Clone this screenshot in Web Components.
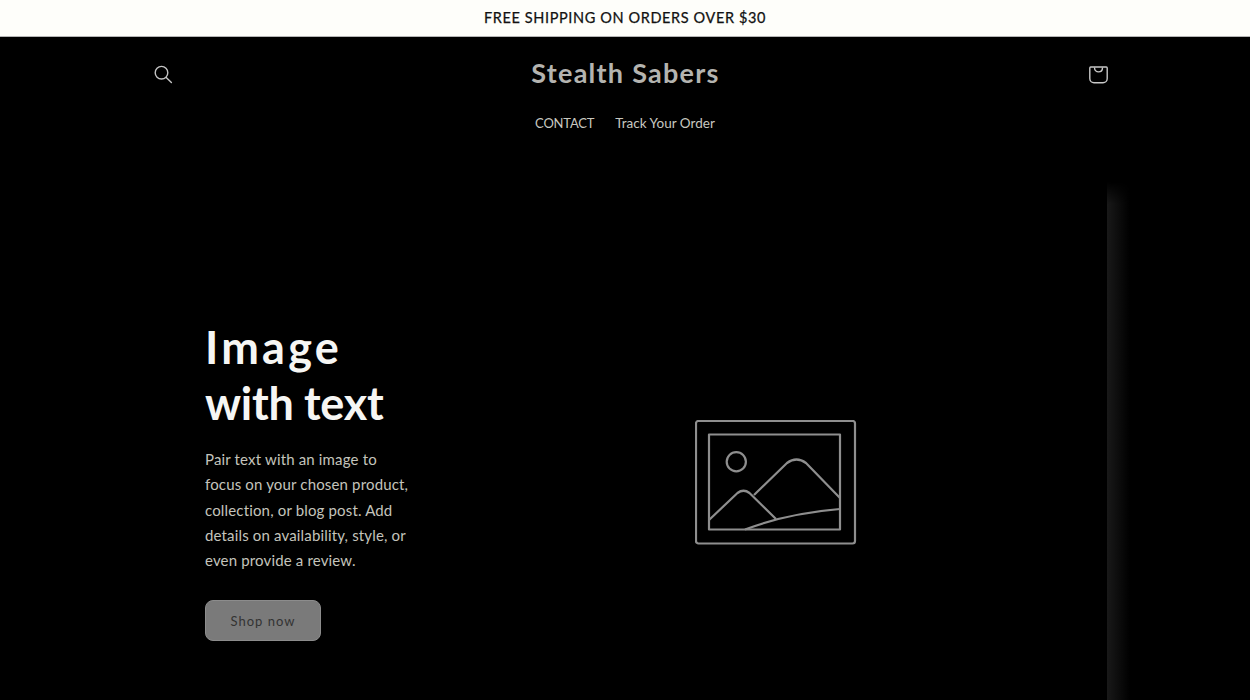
<!DOCTYPE html>
<html lang="en"><head><meta charset="utf-8"><title>Stealth Sabers</title>
<style>
html,body{margin:0;padding:0;background:#000;height:700px;overflow:hidden;font-family:Lato,"Liberation Sans",sans-serif}
</style></head><body>
<announce-bar>FREE SHIPPING ON ORDERS OVER $30</announce-bar>
<site-header name="Stealth Sabers"><nav-link style="--fs:13px;--ls:-.2px">CONTACT</nav-link><nav-link style="--fs:13.5px;--ls:.02px">Track Your Order</nav-link></site-header>
<image-text>
  <span slot="title"><span style="letter-spacing:3.2px">Image</span><br><span style="letter-spacing:-.3px">with text</span></span>
  Pair text with an image to<br>focus on your chosen product,<br>collection, or blog post. Add<br>details on availability, style, or<br>even provide a review.
  <span slot="cta">Shop now</span>
</image-text>
<script>
function def(name, html){
  customElements.define(name, class extends HTMLElement{
    constructor(){super();this.attachShadow({mode:'open'}).innerHTML=typeof html==='function'?html(this):html;}
  });
}
def('announce-bar',`<style>:host{display:flex;align-items:center;justify-content:center;padding-bottom:1px;height:35px;background:#fefefa;border-bottom:1px solid #b5b5b5;color:#121212;font:400 14.5px Lato,sans-serif;letter-spacing:.62px;-webkit-text-stroke:.25px #121212}</style><slot></slot>`);
def('nav-link',`<style>:host{display:block;color:#c8c8c0;font:400 var(--fs,14px)/20px Lato,sans-serif;letter-spacing:var(--ls,0)}</style><slot></slot>`);
def('site-header',el=>`<style>
:host{display:block;height:110px;box-sizing:border-box;padding:19px 135px 0;background:#000}
.top{display:grid;grid-template-columns:1fr auto 1fr;align-items:center;height:36px}
.logo{color:#b4b4b0;font:700 27px/36px Lato,sans-serif;letter-spacing:1.25px;margin:-1px 0 1px 1px}
.search{margin-left:8.5px}
.cart{justify-self:end;display:flex}
svg{display:block}
nav{display:flex;justify-content:center;gap:21px;margin:21px 0 0}
</style>
<div class="top">
<svg class="search" width="36" height="36" viewBox="0 0 36 36" fill="none" stroke="#c4c4c4" stroke-width="1.4"><circle cx="17.5" cy="16.7" r="6.3"/><path d="M22.2 21.4l5.2 5.2" stroke-linecap="round"/></svg>
<div class="logo">${el.getAttribute('name')}</div>
<div class="cart"><svg width="36" height="36" viewBox="0 -1 36 36" fill="none" stroke="#c8c8c8" stroke-width="1.4"><path d="M11.7 10h15.6a.9.9 0 0 1 .9.9v10.600a4.200 4.200 0 0 1-4.200 4.200h-9a4.200 4.200 0 0 1-4.200-4.200V10.900a.9.9 0 0 1 .9-.9z"/><path d="M15.500 10.400c0 6 8 6 8 0"/></svg></div>
</div>
<nav><slot></slot></nav>`);
def('image-text',`<style>
:host{display:grid;grid-template-columns:302px 662px;height:553px;padding:0 0 0 143px;box-sizing:border-box;background:#000}
.text{padding:172px 0 0 62px;min-width:0;white-space:nowrap}
h2{margin:0;color:#f6f6f4;font:700 45px/56px Lato,sans-serif}
p{margin:16px 0 0;color:#c4c4bc;font:400 15px/25.3px Lato,sans-serif;letter-spacing:.16px}
.btn{display:flex;align-items:center;justify-content:center;width:116px;height:41px;margin-top:27px;box-sizing:border-box;border:1px solid #8c8c8c;border-radius:8px;background:#7a7a7a;color:#333;font:400 13px Lato,sans-serif;letter-spacing:1px}
.media{position:relative;display:flex;align-items:center;justify-content:center;padding-top:8px}
.media svg{display:block;margin-top:110px}
.edge{position:absolute;left:100%;top:35px;bottom:0;width:23px;background:linear-gradient(90deg,#191919,#000);-webkit-mask:linear-gradient(#0000,#000 22px)}
</style>
<div class="text"><h2><slot name="title"></slot></h2><p><slot></slot></p><div class="btn"><slot name="cta"></slot></div></div>
<div class="media">
<svg width="162" height="125" viewBox="0 0 162 125" fill="none" stroke="#8e8e8e" stroke-width="2.2" stroke-linejoin="round">
<rect x="1" y="1" width="159" height="122.5" rx="2.500"/>
<rect x="14" y="14.500" width="131" height="95"/>
<circle cx="41.300" cy="41.700" r="9.600"/>
<path d="M14 100L42.500 73q6-4.500 12 0L81 99"/>
<path d="M59 75L92 43q9.500-7 19 0L145 78"/>
<path d="M50 109.500C75 100 110 92 145 89"/>
</svg>
<div class="edge"></div>
</div>`);
</script>
</body></html>
